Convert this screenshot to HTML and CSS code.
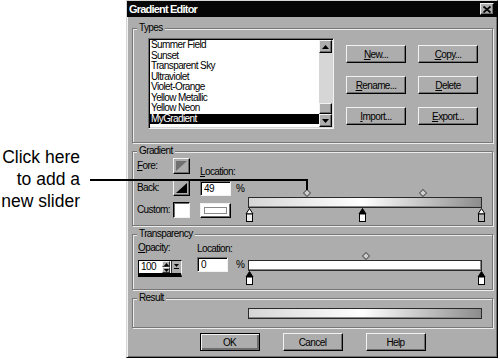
FILE: index.html
```html
<!DOCTYPE html>
<html lang="en">
<head>
  <meta charset="UTF-8" />
  <meta name="viewport" content="width=device-width, initial-scale=1.0"/>
  <title>Gradient Editor</title>
  <link rel="stylesheet" href="styles.css">
</head>
<body>
  <div class="page">
    <div class="callout">
      <p>Click here<br>to add a<br>new slider</p>
    </div>

    <div class="dialog">
      <div class="titlebar">
        <span class="title">Gradient Editor</span>
        <button class="close">
          <svg width="8" height="7" viewBox="0 0 8 7"><path d="M0.5 0.5 L7.5 6.5 M7.5 0.5 L0.5 6.5" stroke="#000" stroke-width="1.8"/></svg>
        </button>
      </div>

      <div class="dialog-body">
        <fieldset class="group types">
          <legend>Types</legend>
          <div class="types-row">
            <div class="listbox">
              <ul class="list-items">
                <li>Summer Field</li>
                <li>Sunset</li>
                <li>Transparent Sky</li>
                <li>Ultraviolet</li>
                <li>Violet-Orange</li>
                <li>Yellow Metallic</li>
                <li>Yellow Neon</li>
                <li class="selected">MyGradient</li>
              </ul>
              <div class="scrollbar">
                <div class="sb-btn"><svg width="7" height="4" viewBox="0 0 7 4"><path d="M3.5 0 L7 4 L0 4 Z"/></svg></div>
                <div class="sb-track"></div>
                <div class="sb-thumb"></div>
                <div class="sb-btn"><svg width="7" height="4" viewBox="0 0 7 4"><path d="M0 0 L7 0 L3.5 4 Z"/></svg></div>
              </div>
            </div>
            <div class="type-buttons">
              <button class="btn"><u>N</u>ew...</button>
              <button class="btn"><u>C</u>opy...</button>
              <button class="btn"><u>R</u>ename...</button>
              <button class="btn"><u>D</u>elete</button>
              <button class="btn"><u>I</u>mport...</button>
              <button class="btn"><u>E</u>xport...</button>
            </div>
          </div>
        </fieldset>

        <fieldset class="group gradient">
          <legend>Gradient</legend>
          <div class="gradient-row">
            <div class="color-grid">
              <span class="lbl"><u>F</u>ore:</span>
              <span class="swatch">
                <svg width="11" height="10" viewBox="0 0 11 10"><path d="M0 0 L11 0 L0 10 Z" fill="#707070"/></svg>
              </span>
              <span class="lbl loc-lbl"><u>L</u>ocation:</span>
              <span></span>

              <span class="lbl">Back:</span>
              <span class="swatch">
                <svg width="11" height="10" viewBox="0 0 11 10"><path d="M11 0 L11 10 L0 10 Z" fill="#000"/></svg>
              </span>
              <span class="field">49</span>
              <span class="pct">%</span>

              <span class="lbl">Custom:</span>
              <span class="swatch sunken-white"></span>
              <span class="color-rect"><i></i></span>
              <span></span>
            </div>

            <div class="slider grad-slider">
              <div class="markers">
                <span class="diamond" style="left: 24.5%"></span>
                <span class="diamond" style="left: 74.5%"></span>
              </div>
              <div class="bar bar-gradient"></div>
              <div class="stops">
                <span class="stop" style="left: 0%">
                  <svg width="9" height="14" viewBox="0 0 9 14"><path d="M4.5 0.5 L8 6 L1 6 Z" fill="#fff" stroke="#000"/><rect x="1.5" y="6" width="6" height="7.5" fill="#ececec" stroke="#000"/></svg>
                </span>
                <span class="stop" style="left: 49%">
                  <svg width="9" height="14" viewBox="0 0 9 14"><path d="M4.5 0.5 L8 6 L1 6 Z" fill="#000" stroke="#000"/><rect x="1.5" y="6" width="6" height="7.5" fill="#fff" stroke="#000"/></svg>
                </span>
                <span class="stop" style="left: 100%">
                  <svg width="9" height="14" viewBox="0 0 9 14"><path d="M4.5 0.5 L8 6 L1 6 Z" fill="#fff" stroke="#000"/><rect x="1.5" y="6" width="6" height="7.5" fill="#b4b4b4" stroke="#000"/></svg>
                </span>
              </div>
            </div>
          </div>
        </fieldset>

        <fieldset class="group transparency">
          <legend>Transparency</legend>
          <div class="trans-row">
            <div class="opacity-col">
              <span class="lbl"><u>O</u>pacity:</span>
              <div class="spin">
                <span class="spin-value">100</span>
                <span class="spin-arrows">
                  <i><svg width="5" height="3" viewBox="0 0 5 3"><path d="M2.5 0 L5 3 L0 3 Z"/></svg></i>
                  <i><svg width="5" height="3" viewBox="0 0 5 3"><path d="M0 0 L5 0 L2.5 3 Z"/></svg></i>
                </span>
                <span class="spin-drop">
                  <svg width="5" height="6" viewBox="0 0 5 6"><path d="M0 0 L5 0 L2.5 3 Z"/><rect x="0" y="4" width="5" height="1"/></svg>
                </span>
              </div>
            </div>
            <div class="location-col">
              <span class="lbl">Location:</span>
              <span class="field">0</span>
            </div>
            <span class="pct trans-pct">%</span>
            <div class="slider trans-slider">
              <div class="markers">
                <span class="diamond" style="left: 50%"></span>
              </div>
              <div class="bar bar-white"></div>
              <div class="stops">
                <span class="stop" style="left: 0%">
                  <svg width="9" height="14" viewBox="0 0 9 14"><path d="M4.5 0.5 L8 6 L1 6 Z" fill="#000" stroke="#000"/><rect x="1.5" y="6" width="6" height="7.5" fill="#fff" stroke="#000"/></svg>
                </span>
                <span class="stop" style="left: 100%">
                  <svg width="9" height="14" viewBox="0 0 9 14"><path d="M4.5 0.5 L8 6 L1 6 Z" fill="#000" stroke="#000"/><rect x="1.5" y="6" width="6" height="7.5" fill="#fff" stroke="#000"/></svg>
                </span>
              </div>
            </div>
          </div>
        </fieldset>

        <fieldset class="group result">
          <legend>Result</legend>
          <div class="bar bar-gradient result-bar"></div>
        </fieldset>

        <div class="dialog-buttons">
          <button class="btn btn-default">OK</button>
          <button class="btn">Cancel</button>
          <button class="btn">Help</button>
        </div>
      </div>
    </div>

    <svg class="callout-line" width="500" height="359">
      <polyline points="90,180 307,180 307,190" fill="none" stroke="#000" stroke-width="2"/>
    </svg>
  </div>
</body>
</html>
```

FILE: styles.css
```css
body {
  margin: 0;
  background: #fff;
  font-family: "Liberation Sans Narrow", "Liberation Sans", Arial, sans-serif;
  font-size: 10px;
  letter-spacing: -0.6px;
  color: #000;
}

.page {
  position: relative;
  display: flex;
  width: 500px;
  height: 359px;
}

.callout {
  width: 126px;
  flex: none;
}

.callout p {
  margin: 146px 46px 0 0;
  text-align: right;
  font-family: "Liberation Sans", Arial, sans-serif;
  font-size: 17.5px;
  line-height: 22px;
  letter-spacing: normal;
}

.callout-line {
  position: absolute;
  left: 0;
  top: 0;
  pointer-events: none;
}

/* dialog frame */
.dialog {
  width: 372px;
  height: 358px;
  box-sizing: border-box;
  background: #adadad;
  border: 1px solid;
  border-color: #d6d6d6 #000 #000 #d6d6d6;
  box-shadow: inset 1px 1px 0 #f2f2f2, inset -1px -1px 0 #6e6e6e;
}

.titlebar {
  height: 16px;
  background: #050505;
  display: flex;
  align-items: center;
  justify-content: space-between;
  padding: 0 3px 0 2px;
}

.title {
  color: #fff;
  font-weight: bold;
  font-size: 11px;
  letter-spacing: -0.8px;
}

.close {
  width: 14px;
  height: 12px;
  padding: 0;
  background: #adadad;
  border: 1px solid;
  border-color: #f2f2f2 #000 #000 #f2f2f2;
  box-shadow: inset -1px -1px 0 #6e6e6e;
  display: flex;
  align-items: center;
  justify-content: center;
}

.dialog-body {
  padding: 5px 4px 0 5px;
}

/* etched group boxes */
.group {
  margin: 2px 0 0;
  padding: 0 4px;
  min-width: 0;
  border: 1px solid #777;
  box-shadow: inset 1px 1px 0 #ececec, 1px 1px 0 #ececec;
}

.group.types {
  margin-top: 0;
}

.group legend {
  padding: 0 2px;
  line-height: 12px;
  background: #adadad;
}

/* types */
.types-row {
  display: flex;
  gap: 12px;
  padding: 4px 0 13px 11px;
}

.listbox {
  width: 186px;
  height: 91px;
  box-sizing: border-box;
  padding: 1px;
  display: flex;
  background: #fff;
  border: 1px solid;
  border-color: #6e6e6e #f2f2f2 #f2f2f2 #6e6e6e;
  box-shadow: inset 1px 1px 0 #000, inset -1px -1px 0 #d6d6d6;
}

.list-items {
  flex: 1;
  margin: 0;
  padding: 0;
  list-style: none;
}

.list-items li {
  line-height: 10.5px;
  height: 10.5px;
  padding-left: 1px;
  white-space: nowrap;
}

.list-items li.selected {
  background: #000;
  color: #fff;
}

.scrollbar {
  width: 13px;
  display: flex;
  flex-direction: column;
  background: #d6d6d6;
}

.sb-btn,
.sb-thumb {
  box-sizing: border-box;
  background: #adadad;
  border: 1px solid;
  border-color: #f2f2f2 #000 #000 #f2f2f2;
  box-shadow: inset -1px -1px 0 #6e6e6e;
}

.sb-btn {
  height: 13px;
  display: flex;
  align-items: center;
  justify-content: center;
}

.sb-track {
  flex: 1;
}

.sb-thumb {
  height: 11px;
}

.type-buttons {
  display: grid;
  grid-template-columns: 60px 60px;
  grid-auto-rows: 18px;
  column-gap: 12px;
  row-gap: 13px;
  margin-top: 7px;
  align-self: flex-start;
}

.btn {
  width: 60px;
  height: 18px;
  padding: 0;
  font: inherit;
  letter-spacing: -0.6px;
  color: #000;
  background: #adadad;
  border: 1px solid;
  border-color: #f2f2f2 #000 #000 #f2f2f2;
  box-shadow: inset -1px -1px 0 #6e6e6e;
}

.btn-default {
  border-color: #000;
  box-shadow: inset 1px 1px 0 #f2f2f2, inset -2px -2px 0 #6e6e6e;
}

/* gradient */
.gradient-row {
  display: flex;
  align-items: flex-start;
  padding: 1px 0 3px 0;
}

.color-grid {
  display: grid;
  grid-template-columns: 36px 27px 34px 14px;
  grid-template-rows: 16px 16px 16px;
  row-gap: 6px;
  align-items: center;
}

.lbl {
  line-height: 12px;
  white-space: nowrap;
}

.loc-lbl {
  align-self: end;
  margin-bottom: -4px;
}

.swatch {
  width: 17px;
  height: 16px;
  box-sizing: border-box;
  background: #adadad;
  border: 1px solid;
  border-color: #f2f2f2 #000 #000 #f2f2f2;
  box-shadow: inset -1px -1px 0 #6e6e6e;
  display: flex;
  align-items: center;
  justify-content: center;
}

.swatch.sunken-white {
  background: #fff;
  border-color: #000 #f2f2f2 #f2f2f2 #000;
  box-shadow: inset 1px 1px 0 #6e6e6e;
}

.field {
  width: 31px;
  height: 15px;
  box-sizing: border-box;
  padding-left: 3px;
  line-height: 13px;
  background: #fff;
  border: 1px solid;
  border-color: #6e6e6e #f2f2f2 #f2f2f2 #6e6e6e;
  box-shadow: inset 1px 1px 0 #000;
}

.color-rect {
  width: 31px;
  height: 15px;
  box-sizing: border-box;
  padding: 3px;
  background: #fff;
  border: 1px solid;
  border-color: #f2f2f2 #000 #000 #f2f2f2;
  box-shadow: inset -1px -1px 0 #6e6e6e;
  display: flex;
}

.color-rect i {
  flex: 1;
  border: 1px solid #8a8a8a;
}

.pct {
  padding-left: 2px;
}

.slider {
  width: 234px;
  flex: none;
}

.grad-slider {
  padding-top: 31px;
}

.markers,
.stops {
  position: relative;
  margin: 0 1px;
}

.markers {
  height: 7px;
}

.stops {
  height: 14px;
}

.diamond {
  position: absolute;
  top: 1px;
  width: 4px;
  height: 4px;
  margin-left: -2px;
  background: #d0d0d0;
  border: 1px solid #555;
  transform: rotate(45deg);
}

.stop {
  position: absolute;
  top: 0;
  width: 9px;
  margin-left: -4.5px;
  line-height: 0;
}

.bar {
  height: 11px;
  margin-top: 1px;
  box-sizing: border-box;
  border: 1px solid #2a2a2a;
  box-shadow: inset -1px -1px 0 #8a8a8a;
}

.bar-gradient {
  background: linear-gradient(to right, #d6d6d6 0%, #fff 49%, #8c8c8c 100%);
}

.bar-white {
  background: #fff;
}

/* transparency */
.trans-row {
  display: flex;
  align-items: flex-start;
  padding: 2px 0 4px 1px;
}

.opacity-col {
  width: 44px;
  display: flex;
  flex-direction: column;
  gap: 6px;
}

.spin {
  height: 17px;
  box-sizing: border-box;
  display: flex;
  background: #fff;
  border: 1px solid;
  border-color: #000 #f2f2f2 #000 #000;
  border-bottom-width: 4px;
}

.spin-value {
  flex: 1;
  padding-left: 2px;
  line-height: 12px;
}

.spin-arrows {
  width: 8px;
  display: flex;
  flex-direction: column;
}

.spin-arrows i {
  flex: 1;
  background: #adadad;
  border: 1px solid;
  border-color: #f2f2f2 #333 #333 #f2f2f2;
  display: flex;
  align-items: center;
  justify-content: center;
}

.spin-drop {
  width: 9px;
  margin-left: 1px;
  background: #adadad;
  border-left: 1px solid #333;
  display: flex;
  align-items: center;
  justify-content: center;
}

.location-col {
  width: 37px;
  margin-left: 15px;
  padding-top: 1px;
  display: flex;
  flex-direction: column;
  gap: 2px;
}

.trans-pct {
  width: 12px;
  padding-top: 17px;
  line-height: 12px;
}

.trans-slider {
  padding-top: 10px;
}

/* result */
.result-bar {
  width: 234px;
  margin: 4px 0 8px 111px;
}

.dialog-buttons {
  display: flex;
  justify-content: center;
  gap: 23px;
  margin-top: 5px;
}
```
